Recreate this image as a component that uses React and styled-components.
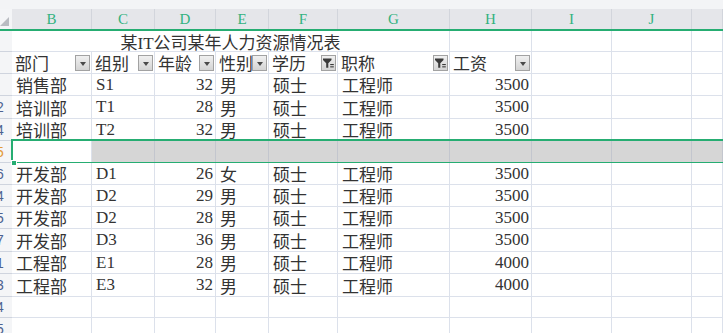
import React from 'react'
import styled, { createGlobalStyle, css } from 'styled-components'

const GREEN = '#26ad72'
const GRID = '#dce1eb'
const COLS = '12px 80px 63px 61px 53px 69px 112px 82px 80px 80px 1fr'

const Global = createGlobalStyle`
  *, *::before, *::after { box-sizing: border-box; }
  html, body { margin: 0; padding: 0; background: #fff; overflow: hidden; }
  body { font-family: "Liberation Serif", "Noto Sans CJK SC", serif; }
`

const Sheet = styled.div`
  width: 723px;
  height: 333px;
  overflow: hidden;
  display: flex;
  flex-direction: column;
`

const TopStrip = styled.div`
  height: 9px;
  background: #f3f4f6;
  flex: none;
`

const Row = styled.div`
  display: grid;
  grid-template-columns: ${COLS};
  height: ${p => p.$h || 22}px;
  flex: none;
  position: relative;
  ${p => p.$selected && css`
    &::after {
      content: '';
      position: absolute;
      left: 11px;
      right: -10px;
      top: -2px;
      bottom: -1px;
      border: 2px solid ${GREEN};
      pointer-events: none;
    }
    &::before {
      content: '';
      position: absolute;
      left: 11px;
      bottom: -3px;
      width: 6px;
      height: 6px;
      background: ${GREEN};
      border: 1px solid #fff;
      z-index: 2;
    }
  `}
`

const HeadRow = styled(Row)`
  background: #e5e6ea;
  border-bottom: 2px solid ${GREEN};
`

const Corner = styled.div`
  background: #f4f5f7;
  position: relative;
  overflow: hidden;
  &::after {
    content: '';
    position: absolute;
    right: 3px;
    bottom: 3px;
    width: 0;
    height: 0;
    border-left: 9px solid transparent;
    border-bottom: 9px solid #b9bcc2;
  }
`

const ColHead = styled.div`
  display: flex;
  align-items: center;
  justify-content: center;
  color: #33b27f;
  font-size: 15px;
  border-right: 1px solid #d2d5dc;
`

const RowNum = styled.div`
  background: #f4f5f7;
  border-bottom: 1px solid #cfd4de;
  overflow: hidden;
  position: relative;
  span {
    position: absolute;
    left: -19px;
    width: 30px;
    top: 0;
    bottom: 0;
    display: flex;
    align-items: center;
    justify-content: center;
    font-family: "Liberation Sans", sans-serif;
    font-size: 14px;
    color: ${p => (p.$active ? '#e39a36' : '#4d6391')};
  }
`

const Cell = styled.div`
  border-right: 1px solid ${p => (p.$sel ? '#c3c6ce' : GRID)};
  border-bottom: 1px solid ${p => (p.$sel ? '#c3c6ce' : GRID)};
  background: ${p => (p.$sel ? '#d6d6d6' : '#fff')};
  display: flex;
  align-items: center;
  justify-content: ${p => (p.$right ? 'flex-end' : 'flex-start')};
  padding: ${p => (p.$right ? '0 2px 0 0' : '0 0 0 4px')};
  font-size: 17px;
  color: #333;
  white-space: nowrap;
  overflow: hidden;
  min-width: 0;
`

const Title = styled(Cell)`
  grid-column: 2 / 8;
  justify-content: center;
  padding: 0;
`

const FieldCell = styled(Cell)`
  justify-content: space-between;
  padding: 0 1px 0 3px;
  span {
    overflow: hidden;
    min-width: 0;
  }
`

const FilterBtn = styled.div`
  width: 15px;
  height: 16px;
  flex: none;
  border: 1px solid #a2a2a2;
  background: linear-gradient(#f0f0f0, #d4d4d4);
  display: flex;
  align-items: center;
  justify-content: center;
  &::after {
    content: '';
    display: ${p => (p.$active ? 'none' : 'block')};
    margin-top: 2px;
    border-left: 3.5px solid transparent;
    border-right: 3.5px solid transparent;
    border-top: 4px solid #4a4a4a;
  }
`

function Funnel() {
  return (
    <svg width="13" height="12" viewBox="0 0 13 12">
      <path d="M1 1.5h8.5v1.6L6.3 6.2v4.6H4.2V6.2L1 3.1z" fill="#3a3a3a" />
      <rect x="8.2" y="7" width="3.6" height="1.1" fill="#3a3a3a" />
      <rect x="8.2" y="9.3" width="3.6" height="1.1" fill="#3a3a3a" />
    </svg>
  )
}

const letters = ['B', 'C', 'D', 'E', 'F', 'G', 'H', 'I', 'J', '']

const fields = [
  ['部门'], ['组别'], ['年龄'], ['性别'], ['学历', true], ['职称', true], ['工资'],
]

const data = [
  { n: '3', h: 22, v: ['销售部', 'S1', '32', '男', '硕士', '工程师', '3500'] },
  { n: '12', h: 23, v: ['培训部', 'T1', '28', '男', '硕士', '工程师', '3500'] },
  { n: '14', h: 22, v: ['培训部', 'T2', '32', '男', '硕士', '工程师', '3500'] },
  { n: '15', h: 22, sel: true, v: ['', '', '', '', '', '', ''] },
  { n: '16', h: 22, v: ['开发部', 'D1', '26', '女', '硕士', '工程师', '3500'] },
  { n: '24', h: 22, v: ['开发部', 'D2', '29', '男', '硕士', '工程师', '3500'] },
  { n: '25', h: 22, v: ['开发部', 'D2', '28', '男', '硕士', '工程师', '3500'] },
  { n: '27', h: 23, v: ['开发部', 'D3', '36', '男', '硕士', '工程师', '3500'] },
  { n: '31', h: 22, v: ['工程部', 'E1', '28', '男', '硕士', '工程师', '4000'] },
  { n: '33', h: 23, v: ['工程部', 'E3', '32', '男', '硕士', '工程师', '4000'] },
  { n: '34', h: 21, v: ['', '', '', '', '', '', ''] },
  { n: '35', h: 22, v: ['', '', '', '', '', '', ''] },
]

const numeric = [false, false, true, false, false, false, true]

export default function App() {
  return (
    <Sheet>
      <Global />
      <TopStrip />
      <HeadRow $h={22}>
        <Corner />
        {letters.map((l, i) => (
          <ColHead key={i}>{l}</ColHead>
        ))}
      </HeadRow>

      <Row $h={21}>
        <RowNum><span>1</span></RowNum>
        <Title>某IT公司某年人力资源情况表</Title>
        <Cell />
        <Cell />
        <Cell />
        <Cell />
      </Row>

      <Row $h={22}>
        <RowNum><span>2</span></RowNum>
        {fields.map(([label, active]) => (
          <FieldCell key={label}>
            <span>{label}</span>
            <FilterBtn $active={active}>{active && <Funnel />}</FilterBtn>
          </FieldCell>
        ))}
        <Cell />
        <Cell />
        <Cell />
      </Row>

      {data.map(r => (
        <Row key={r.n} $h={r.h} $selected={r.sel}>
          <RowNum $active={r.sel}><span>{r.n}</span></RowNum>
          {r.v.map((v, i) => (
            <Cell key={i} $right={numeric[i]} $sel={r.sel && i > 0}>{v}</Cell>
          ))}
          <Cell $sel={r.sel} />
          <Cell $sel={r.sel} />
          <Cell $sel={r.sel} />
        </Row>
      ))}
    </Sheet>
  )
}
